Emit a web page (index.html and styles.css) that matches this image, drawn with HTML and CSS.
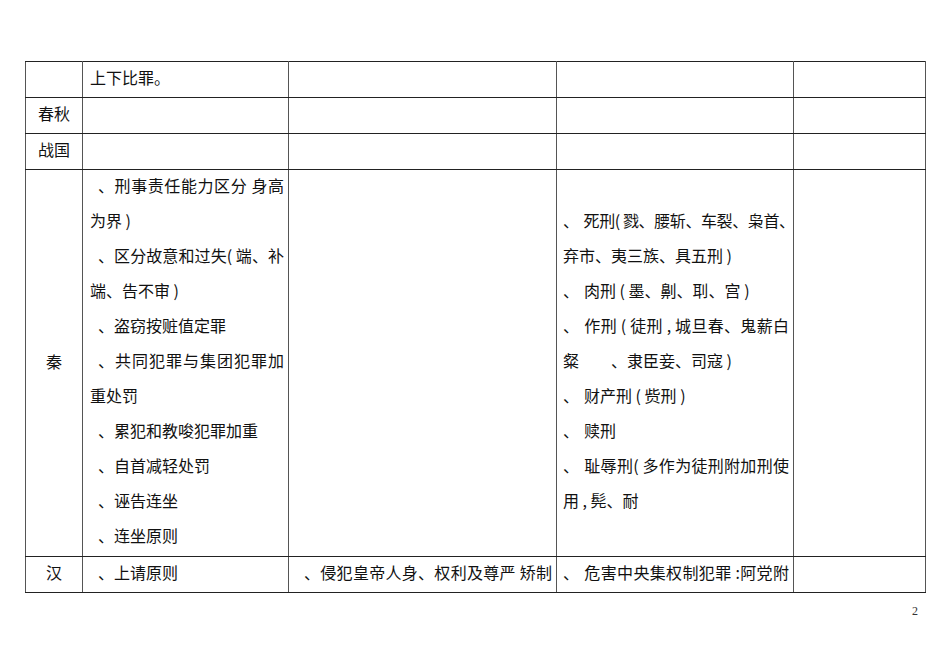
FILE: index.html
```html
<!DOCTYPE html>
<html lang="zh-CN">
<head>
<meta charset="utf-8">
<title>刑罚表</title>
<link rel="stylesheet" href="styles.css">
</head>
<body>
<table class="grid">
  <colgroup>
    <col class="c-era">
    <col class="c-a">
    <col class="c-b">
    <col class="c-c">
    <col class="c-d">
  </colgroup>
  <tr class="row-s">
    <td class="era"></td>
    <td class="txt"><div class="ln">上下比罪。</div></td>
    <td></td>
    <td></td>
    <td></td>
  </tr>
  <tr class="row-s">
    <td class="era"><div class="ln">春秋</div></td>
    <td></td>
    <td></td>
    <td></td>
    <td></td>
  </tr>
  <tr class="row-s">
    <td class="era"><div class="ln">战国</div></td>
    <td></td>
    <td></td>
    <td></td>
    <td></td>
  </tr>
  <tr class="row-qin">
    <td class="era mid"><div class="ln">秦</div></td>
    <td class="txt">
      <div class="ln full item">、刑事责任能力区分 身高</div>
      <div class="ln">为界 )</div>
      <div class="ln full item">、区分故意和过失( 端、补</div>
      <div class="ln">端、告不审 )</div>
      <div class="ln item">、盗窃按赃值定罪</div>
      <div class="ln full item">、共同犯罪与集团犯罪加</div>
      <div class="ln">重处罚</div>
      <div class="ln item">、累犯和教唆犯罪加重</div>
      <div class="ln item">、自首减轻处罚</div>
      <div class="ln item">、诬告连坐</div>
      <div class="ln item">、连坐原则</div>
    </td>
    <td></td>
    <td class="txt wide">
      <div class="ln"></div>
      <div class="ln full item tight"><span class="mk">、</span>死刑( 戮、腰斩、车裂、枭首、</div>
      <div class="ln">弃市、夷三族、具五刑 )</div>
      <div class="ln item"><span class="mk">、</span>肉刑 ( 墨、劓、刵、宫 )</div>
      <div class="ln full item"><span class="mk">、</span>作刑 ( 徒刑 , 城旦春、鬼薪白</div>
      <div class="ln">粲　　、隶臣妾、司寇 )</div>
      <div class="ln item"><span class="mk">、</span>财产刑 ( 赀刑 )</div>
      <div class="ln item"><span class="mk">、</span>赎刑</div>
      <div class="ln full item"><span class="mk">、</span>耻辱刑( 多作为徒刑附加刑使</div>
      <div class="ln">用 , 髡、耐</div>
    </td>
    <td></td>
  </tr>
  <tr class="row-s">
    <td class="era"><div class="ln">汉</div></td>
    <td class="txt"><div class="ln item">、上请原则</div></td>
    <td class="txt"><div class="ln full item">、侵犯皇帝人身、权利及尊严 矫制</div></td>
    <td class="txt wide"><div class="ln full item"><span class="mk">、</span>危害中央集权制犯罪 :阿党附</div></td>
    <td></td>
  </tr>
</table>
<div class="pageno">2</div>
</body>
</html>
```

FILE: styles.css
```css
html, body {
  margin: 0;
  padding: 0;
  background: #ffffff;
}

body {
  width: 950px;
  height: 672px;
  overflow: hidden;
  font-family: "Noto Sans CJK SC", "Noto Sans", sans-serif;
  color: #111111;
}

.grid {
  border-collapse: collapse;
  table-layout: fixed;
  width: 900px;
  margin: 61px 0 0 25px;
}

.c-era { width: 57px; }
.c-a { width: 206px; }
.c-b { width: 268px; }
.c-c { width: 237px; }
.c-d { width: 132px; }

.grid td {
  border-top: 1px solid #222222;
  border-bottom: 1px solid #222222;
  border-left: 1px solid #555555;
  border-right: 1px solid #555555;
  padding: 0 4px 0 7px;
  font-size: 16px;
  line-height: 31px;
  vertical-align: top;
  overflow: visible;
}

.row-s td { height: 35px; }
.row-qin td { height: 382px; }

.grid td.era {
  text-align: center;
  padding: 0;
}

.grid td.era.mid {
  vertical-align: middle;
  padding-bottom: 4px;
}

.grid td.wide {
  padding-left: 6px;
}

.ln {
  height: 35px;
  white-space: nowrap;
}

.era .ln {
  height: 31px;
}

.ln.item {
  text-indent: 8px;
}

.wide .ln.item {
  text-indent: 0;
}

.ln.full {
  text-align: justify;
  text-align-last: justify;
}

.ln.tight {
  letter-spacing: -0.4px;
}

.mk {
  margin-right: 5px;
}

.pageno {
  width: 918px;
  margin-top: 11px;
  text-align: right;
  font-family: "Liberation Serif", serif;
  font-size: 12px;
  line-height: 14px;
  color: #333333;
}
```
